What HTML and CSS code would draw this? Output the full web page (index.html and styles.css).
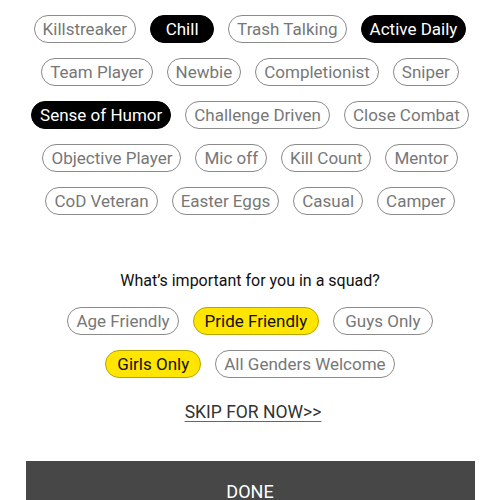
FILE: index.html
```html
<!DOCTYPE html>
<html lang="en">
<head>
    <meta charset="UTF-8">
    <title>Squad preferences</title>
    <link rel="stylesheet" href="styles.css">
</head>
<body>
    <div class="page">
        <div class="tag-list">
            <span class="tag">Killstreaker</span>
            <span class="tag tag-on">Chill</span>
            <span class="tag">Trash Talking</span>
            <span class="tag tag-on">Active Daily</span>
        </div>
        <div class="tag-list">
            <span class="tag">Team Player</span>
            <span class="tag">Newbie</span>
            <span class="tag">Completionist</span>
            <span class="tag">Sniper</span>
        </div>
        <div class="tag-list">
            <span class="tag tag-on">Sense of Humor</span>
            <span class="tag">Challenge Driven</span>
            <span class="tag">Close Combat</span>
        </div>
        <div class="tag-list">
            <span class="tag">Objective Player</span>
            <span class="tag">Mic off</span>
            <span class="tag">Kill Count</span>
            <span class="tag">Mentor</span>
        </div>
        <div class="tag-list">
            <span class="tag">CoD Veteran</span>
            <span class="tag">Easter Eggs</span>
            <span class="tag">Casual</span>
            <span class="tag">Camper</span>
        </div>

        <h2 class="question">What’s important for you in a squad?</h2>

        <div class="tag-list">
            <span class="tag">Age Friendly</span>
            <span class="tag tag-yellow">Pride Friendly</span>
            <span class="tag tag-wide">Guys Only</span>
        </div>
        <div class="tag-list">
            <span class="tag tag-yellow">Girls Only</span>
            <span class="tag">All Genders Welcome</span>
        </div>

        <a href="#" class="skip-link">SKIP FOR NOW&gt;&gt;</a>

        <button class="done-btn">DONE</button>
    </div>
</body>
</html>
```

FILE: styles.css
```css
:root {
    --chip-border: #8a8a8a;
    --chip-text: #777;
    --yellow: #ffe500;
    --dark: #474747;
}

body {
    margin: 0;
    font-family: Roboto, 'Liberation Sans', Arial, sans-serif;
    background: #fff;
    color: #222;
}

.page {
    display: flex;
    flex-direction: column;
    align-items: center;
    padding-top: 15px;
}

.tag-list {
    display: flex;
    justify-content: center;
    gap: 14px;
    margin-bottom: 15px;
}

.tag {
    display: inline-flex;
    align-items: center;
    justify-content: center;
    height: 28px;
    min-width: 64px;
    box-sizing: border-box;
    padding: 0 8px;
    border: 1.5px solid var(--chip-border);
    border-radius: 14px;
    font-size: 17px;
    color: var(--chip-text);
    white-space: nowrap;
}

.tag-on {
    background: #000;
    border-color: #000;
    color: #fff;
}

.tag-yellow {
    padding: 0 11px;
    background: var(--yellow);
    border-color: #b8a600;
    color: #111;
}

.tag-wide {
    padding: 0 11px;
}

.question {
    margin: 41px 0 17px;
    font-size: 16px;
    font-weight: 400;
    color: #111;
}

.skip-link {
    margin-top: 9px;
    margin-left: 6px;
    font-size: 17.5px;
    color: #333;
    text-decoration: underline;
    text-decoration-color: #666;
    text-underline-offset: 3px;
}

.done-btn {
    margin-top: 39px;
    width: 449px;
    height: 50px;
    border: none;
    padding: 10px 0 0;
    background: var(--dark);
    color: #fff;
    font-family: inherit;
    font-size: 18px;
}
```
